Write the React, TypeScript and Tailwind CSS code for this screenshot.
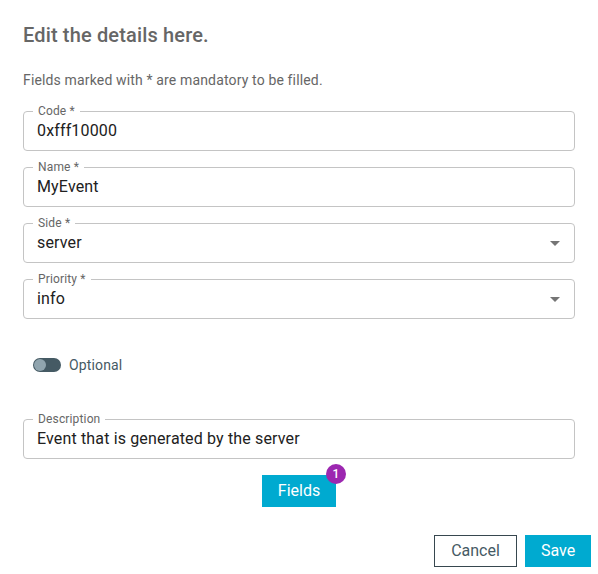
import React from "react";

function Field({ label, value, select }: { label: string; value: string; select?: boolean }) {
  return (
    <div className="relative h-[40px] rounded-[4px] border border-[#c4c4c4] flex items-center pl-[13px] pr-[12px]">
      <span className="absolute left-[9px] top-[-8px] bg-white px-[5px] text-[12px] leading-[14px] text-[#666666] tracking-[0.15px]">
        {label}
      </span>
      <span className="flex-1 text-[16px] text-[#212121] leading-[20px] tracking-[0.15px]">{value}</span>
      {select && (
        <svg width="10" height="5" viewBox="0 0 10 5" className="mr-[2px]">
          <path d="M0 0 L10 0 L5 5 Z" fill="#757575" />
        </svg>
      )}
    </div>
  );
}

export default function App() {
  return (
    <div
      className="w-[598px] h-[574px] bg-white flex flex-col"
      style={{ fontFamily: "Roboto, 'Liberation Sans', sans-serif" }}
    >
      <div className="px-[23px] pt-[19px] flex flex-col">
        <h2 className="text-[20px] leading-[32px] font-medium text-[#666666] tracking-[0.15px]">
          Edit the details here.
        </h2>
        <p className="mt-[19px] text-[14px] leading-[20px] text-[#666666] tracking-[0.15px]">
          Fields marked with * are mandatory to be filled.
        </p>
        <div className="mt-[21px] flex flex-col gap-[16px]">
          <Field label="Code *" value="0xfff10000" />
          <Field label="Name *" value="MyEvent" />
          <Field label="Side *" value="server" select />
          <Field label="Priority *" value="info" select />
        </div>
        <div className="mt-[39px] h-[14px] flex items-center pl-[10px] gap-[8px]">
          <div className="relative w-[28px] h-[14px] rounded-full bg-[#455a64]">
            <div className="absolute left-[1px] top-[1px] w-[12px] h-[12px] rounded-full bg-[#90a4ae]" />
          </div>
          <span className="text-[14px] text-[#455a64] leading-[14px] tracking-[0.15px]">Optional</span>
        </div>
        <div className="mt-[47px]">
          <Field label="Description" value="Event that is generated by the server" />
        </div>
        <div className="mt-[16px] flex justify-center">
          <div className="relative">
            <button className="w-[74px] h-[32px] bg-[#00aad0] text-white text-[16px] flex items-center justify-center">
              Fields
            </button>
            <span className="absolute right-[-10px] top-[-11px] w-[20px] h-[20px] rounded-full bg-[#9c27b0] text-white text-[12px] font-medium flex items-center justify-center">
              1
            </span>
          </div>
        </div>
      </div>
      <div className="mt-[28px] flex justify-end gap-[8px] pr-[7px]">
        <button className="w-[83px] h-[32px] border border-[#37474f] text-[#455a64] text-[16px] flex items-center justify-center">
          Cancel
        </button>
        <button className="w-[66px] h-[32px] bg-[#00aad0] text-white text-[16px] flex items-center justify-center">
          Save
        </button>
      </div>
    </div>
  );
}
